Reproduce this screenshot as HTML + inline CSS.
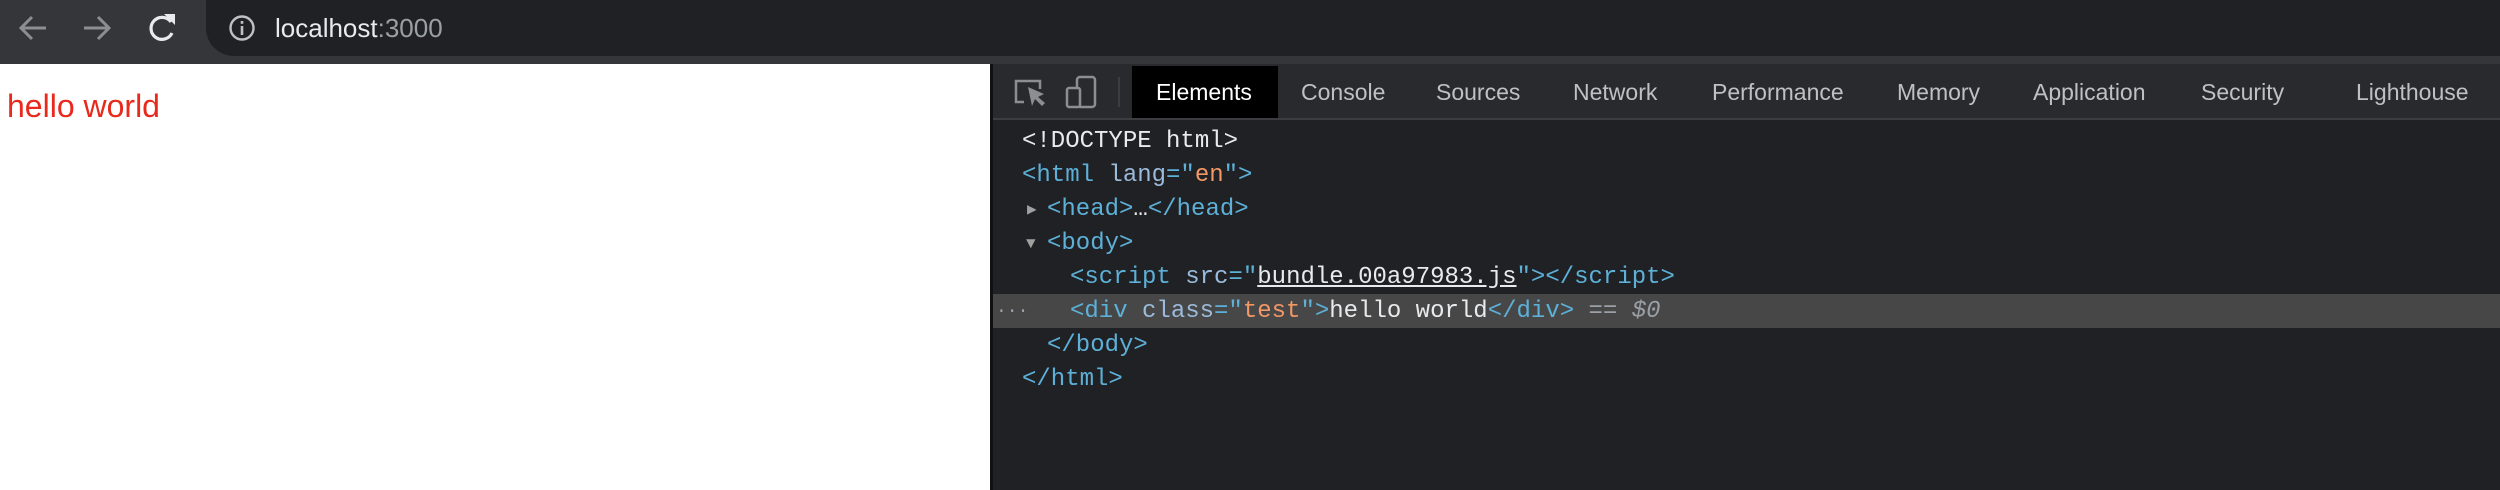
<!DOCTYPE html>
<html><head><style>
body{margin:0;width:2500px;height:490px;overflow:hidden;background:#fff;font-family:"Liberation Sans",sans-serif;position:relative}
.a{position:absolute}
.tab{position:absolute;top:66px;height:52px;line-height:52px;font-size:23px;color:#bdc1c6}
.code{position:absolute;font-family:"Liberation Mono",monospace;font-size:24px;color:#e8eaed;white-space:pre;line-height:34px;height:34px}
.t{color:#5db0d7}.n{color:#9bbbdc}.v{color:#f29766}
</style></head><body>
<div class="a" style="left:0;top:0;width:2500px;height:64px;background:#35363a"></div>
<div class="a" style="left:206px;top:0;width:2294px;height:56px;background:#202124;border-radius:0 0 0 28px"></div>
<svg class="a" style="left:0;top:0" width="200" height="56">
<g stroke="#8d8e91" stroke-width="3" fill="none"><path d="M46 28H22M32 17L21 28L32 39"/><path d="M84 28H108M98 17L109 28L98 39"/></g>
<path d="M171 22A11 11 0 1 0 172 33" stroke="#e8eaed" stroke-width="3.2" fill="none"/><path d="M164 14L175 14L175 25Z" fill="#e8eaed"/>
</svg>
<svg class="a" style="left:228px;top:14px" width="30" height="30"><circle cx="14" cy="14" r="11.5" stroke="#bdc1c6" stroke-width="2.4" fill="none"/><rect x="12.7" y="12" width="2.6" height="9" fill="#bdc1c6"/><rect x="12.7" y="7" width="2.6" height="2.8" fill="#bdc1c6"/></svg>
<div class="a" style="left:275px;top:12px;font-size:26px;line-height:32px;color:#e8eaed">localhost<span style="color:#9aa0a6">:3000</span></div>
<div class="a" style="left:7px;top:86px;font-size:32px;line-height:40px;color:#e8291c">hello world</div>
<div class="a" style="left:990px;top:64px;width:3px;height:426px;background:#111"></div>
<div class="a" style="left:993px;top:64px;width:1507px;height:426px;background:#202124"></div>
<div class="a" style="left:993px;top:64px;width:1507px;height:54px;background:#292a2d"></div>
<div class="a" style="left:993px;top:118px;width:1507px;height:2px;background:#3c3d40"></div>
<svg class="a" style="left:1010px;top:74px" width="110" height="36">
<path d="M14 28H6V7H30V15" stroke="#8d8e91" stroke-width="2.5" fill="none"/><path d="M18 13L22 32L25 25L32 32L35 29L28 23L34 20Z" fill="#8d8e91"/>
<rect x="67" y="3" width="18" height="30" rx="3" stroke="#8d8e91" stroke-width="2.5" fill="none"/><rect x="57" y="14" width="13" height="19" rx="2" stroke="#8d8e91" stroke-width="2.5" fill="#292a2d"/>
<rect x="108" y="3" width="2" height="30" fill="#3c3d40"/></svg>
<div class="a" style="left:1132px;top:66px;width:146px;height:52px;background:#000"></div>
<div class="tab" style="left:1156px;color:#fff">Elements</div>
<div class="tab" style="left:1301px">Console</div>
<div class="tab" style="left:1436px">Sources</div>
<div class="tab" style="left:1573px">Network</div>
<div class="tab" style="left:1712px">Performance</div>
<div class="tab" style="left:1897px">Memory</div>
<div class="tab" style="left:2033px">Application</div>
<div class="tab" style="left:2201px">Security</div>
<div class="tab" style="left:2356px">Lighthouse</div>
<div class="a" style="left:993px;top:294px;width:1507px;height:34px;background:#474747"></div>
<div class="code" style="left:1022px;top:125px">&lt;!DOCTYPE html&gt;</div>
<div class="code" style="left:1022px;top:159px"><span class="t">&lt;html</span> <span class="n">lang</span><span class="t">="</span><span class="v">en</span><span class="t">"&gt;</span></div>
<div class="code" style="left:1027px;top:193px;font-size:16px;color:#a0a0a0">▶</div>
<div class="code" style="left:1047px;top:193px"><span class="t">&lt;head&gt;</span>…<span class="t">&lt;/head&gt;</span></div>
<div class="code" style="left:1026px;top:227px;font-size:16px;color:#a0a0a0">▼</div>
<div class="code" style="left:1047px;top:227px"><span class="t">&lt;body&gt;</span></div>
<div class="code" style="left:1070px;top:261px"><span class="t">&lt;script</span> <span class="n">src</span><span class="t">="</span><span class="n" style="text-decoration:underline;color:#e8eaed">bundle.00a97983.js</span><span class="t">"&gt;&lt;/script&gt;</span></div>
<div class="code" style="left:996px;top:295px;font-size:18px;color:#9aa0a6">···</div>
<div class="code" style="left:1070px;top:295px"><span class="t">&lt;div</span> <span class="n">class</span><span class="t">="</span><span class="v">test</span><span class="t">"&gt;</span>hello world<span class="t">&lt;/div&gt;</span><span style="color:#9aa0a6"> == <i>$0</i></span></div>
<div class="code" style="left:1047px;top:329px"><span class="t">&lt;/body&gt;</span></div>
<div class="code" style="left:1022px;top:363px"><span class="t">&lt;/html&gt;</span></div>
</body></html>
